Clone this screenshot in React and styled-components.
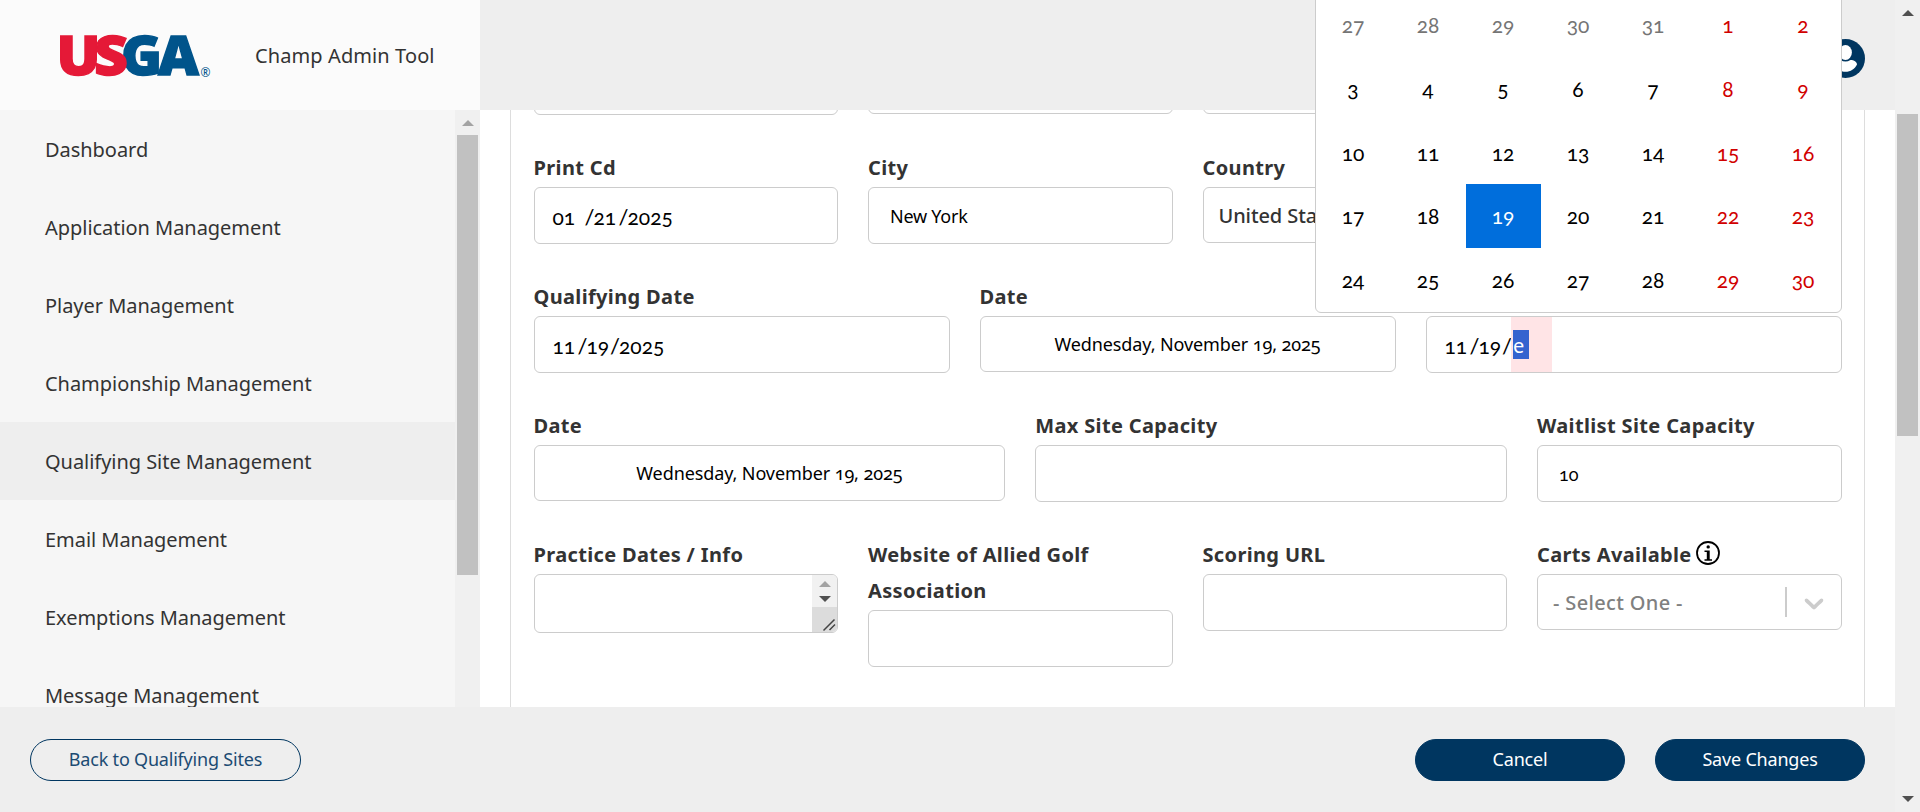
import React from 'react';
import styled, { createGlobalStyle } from 'styled-components';

const GlobalStyle = createGlobalStyle`
  *, *::before, *::after { box-sizing: border-box; }
  body {
    margin: 0;
    overflow: hidden;
    font-family: 'Noto Sans', 'Open Sans', sans-serif;
    font-size: 20px;
    font-variant-numeric: oldstyle-nums;
    color: #333;
    background: #fff;
  }
  button { font: inherit; cursor: pointer; }
`;

const Page = styled.div`
  position: relative;
  display: flex;
  width: 1920px;
  height: 812px;
  overflow: hidden;
`;

const Content = styled.div`
  flex: 1;
  min-width: 0;
  display: flex;
  flex-direction: column;
`;

const TopBar = styled.header`
  display: flex;
  justify-content: space-between;
  height: 110px;
  background: #eee;
`;

const Brand = styled.div`
  display: flex;
  align-items: center;
  width: 480px;
  padding-left: 60px;
  background: #fbfbfb;
`;

const Logo = styled.svg`
  width: 152px;
  height: 44px;
  overflow: visible;
`;

const LogoText = styled.text`
  font-family: 'Noto Sans', sans-serif;
  font-weight: 900;
  font-size: 55px;
  fill: ${(p) => (p.$red ? '#e51937' : '#00548b')};
  stroke: ${(p) => (p.$red ? '#e51937' : '#00548b')};
  stroke-width: 1.4px;
`;

const LogoMark = styled.text`
  font-size: 12px;
  fill: #00548b;
`;

const AppTitle = styled.div`
  margin: 0 0 0 43px;
  white-space: nowrap;
  letter-spacing: 0.1px;
`;

const UserIcon = styled.svg`
  width: 39px;
  height: 39px;
  margin: 39px 30px 0 0;
`;

const Middle = styled.div`
  display: flex;
  height: 597px;
`;

const Sidebar = styled.nav`
  display: flex;
  width: 480px;
  background: #f6f6f6;
  overflow: hidden;
`;

const NavList = styled.ul`
  flex: 1;
  margin: 0;
  padding: 0;
  list-style: none;
`;

const NavItem = styled.li`
  display: flex;
  align-items: center;
  height: 78px;
  padding-left: 45px;
  letter-spacing: -0.04px;
  background: ${(p) => (p.$active ? '#eee' : 'transparent')};
`;

const ScrollTrack = styled.div`
  display: flex;
  flex-direction: column;
  align-items: center;
  width: 25px;
  height: 100%;
  padding-top: 10px;
  background: #f0f0f0;
`;

const ScrollThumb = styled.div`
  width: 21px;
  height: ${(p) => p.$height}px;
  margin-top: ${(p) => p.$gap}px;
  background: #c1c1c1;
`;

const Arrow = styled.span`
  width: 0;
  height: 0;
  border: solid transparent;
  border-width: ${(p) => (p.$down ? '6px 6px 0' : '0 6px 6px')};
  border-${(p) => (p.$down ? 'top' : 'bottom')}-color: ${(p) => (p.$muted ? '#a3a3a3' : '#505050')};
  margin-top: ${(p) => (p.$push ? p.$push : 0)};
`;

const Main = styled.main`
  flex: 1;
  padding: 0 30px;
  overflow: hidden;
  background: #fff;
`;

const Card = styled.section`
  display: flex;
  flex-direction: column;
  gap: 36px;
  height: 800px;
  margin-top: -88px;
  padding: 0 22.5px;
  border: solid #ddd;
  border-width: 0 1px;
`;

const Row = styled.div`
  display: grid;
  grid-template-columns: ${(p) => p.$columns};
  column-gap: 30px;
  height: 93px;
`;

const Field = styled.div`
  display: flex;
  flex-direction: column;
  min-width: 0;
`;

const Label = styled.label`
  display: flex;
  align-items: flex-start;
  margin-top: -1px;
  padding-bottom: 1px;
  font-weight: 700;
  line-height: 36px;
  letter-spacing: 0.35px;
`;

const Control = styled.div`
  flex: none;
  display: flex;
  align-items: center;
  height: ${(p) => p.$height || 57}px;
  border: 1px solid #ccc;
  border-radius: 6px;
  background: #fff;
  overflow: hidden;
  white-space: nowrap;
`;

const TextInput = styled(Control)`
  padding-left: 21px;
  font-size: 18px;
  letter-spacing: -0.25px;
  color: #000;
`;

const NumberInput = styled(TextInput)`
  padding-top: 1px;
  font-family: Lato, 'Noto Sans', sans-serif;
  letter-spacing: 0;
`;

const Readout = styled(Control)`
  justify-content: center;
  font-size: 18px;
  letter-spacing: -0.1px;
  color: #000;
`;

const SelectBox = styled(Control)`
  padding-left: 15px;
  font-weight: 500;
  letter-spacing: ${(p) => (p.$placeholder ? 0.35 : -0.1)}px;
  color: ${(p) => (p.$placeholder ? '#808080' : '#333')};
`;

const Separator = styled.span`
  width: 2px;
  height: 30px;
  margin-left: auto;
  background: #ccc;
`;

const Chevron = styled.svg`
  width: 32px;
  height: 32px;
  margin: 1px 11px 0 11px;
  fill: #ccc;
`;

const DateBox = styled(Control)`
  padding-left: 18px;
  font-family: Lato, 'Noto Sans', sans-serif;
  font-size: 21px;
  color: #000;
`;

const Segment = styled.span`
  width: ${(p) => p.$width}px;
  padding-top: 2px;
`;

const Slash = styled(Segment)`
  padding-left: 1px;
  font-size: 22px;
`;

const InvalidSegment = styled.span`
  display: flex;
  align-items: center;
  width: 41px;
  height: 100%;
  padding-left: 2px;
  background: #ffe4e6;
`;

const Selection = styled.span`
  width: 16px;
  height: 29px;
  font-family: 'Noto Sans', sans-serif;
  font-size: 20px;
  line-height: 31px;
  color: #fff;
  background: #3563cf;
`;

const TextArea = styled(Control)`
  justify-content: flex-end;
`;

const MiniTrack = styled.div`
  display: flex;
  flex-direction: column;
  align-items: center;
  width: 25px;
  height: 57px;
  padding-top: 6px;
  background: #f1f1f1;
`;

const Grip = styled.svg`
  width: 25px;
  height: 25px;
  margin-top: 5px;
  background: #dcdcdc;
`;

const InfoIcon = styled.svg`
  width: 24px;
  height: 24px;
  margin: 4px 0 0 4px;
`;

const Footer = styled.footer`
  display: flex;
  align-items: center;
  gap: 30px;
  height: 105px;
  padding: 0 30px;
  background: #eee;
`;

const Button = styled.button`
  width: ${(p) => p.$width}px;
  height: 42px;
  padding: 0 0 2px;
  border: 1px solid #003660;
  border-radius: 21px;
  font-size: 18px;
  letter-spacing: -0.2px;
  color: ${(p) => (p.$outline ? '#1c4b73' : '#fff')};
  background: ${(p) => (p.$outline ? 'transparent' : '#003660')};
  margin-right: ${(p) => (p.$outline ? 'auto' : 0)};
`;

const Calendar = styled.div`
  position: absolute;
  top: -8px;
  left: 1315px;
  width: 527px;
  height: 321px;
  display: grid;
  grid-template-columns: repeat(7, 75px);
  grid-auto-rows: 63.7px;
  border: 1px solid #ccc;
  border-radius: 6px;
  background: #fff;
`;

const Day = styled.span`
  display: flex;
  align-items: center;
  justify-content: center;
  padding: 0 1px 0 0;
  font-family: Lato, 'Noto Sans', sans-serif;
  font-size: 21px;
  color: ${(p) => ({ out: '#757575', weekend: '#d10000', selected: '#fff' }[p.$kind] || '#000')};
  background: ${(p) => (p.$kind === 'selected' ? '#006edc' : 'transparent')};
`;

const NAV = [
  'Dashboard',
  'Application Management',
  'Player Management',
  'Championship Management',
  'Qualifying Site Management',
  'Email Management',
  'Exemptions Management',
  'Message Management',
];

const DAYS = [27, 28, 29, 30, 31, ...Array.from({ length: 30 }, (_, i) => i + 1)];

function dayKind(day, index) {
  if (index < 5) return 'out';
  if (day === 19) return 'selected';
  return index % 7 > 4 ? 'weekend' : 'day';
}

function DateInput({ month, day, year, monthWidth = 24, dayWidth = 22.5 }) {
  return (
    <DateBox>
      <Segment $width={monthWidth}>{month}</Segment>
      <Slash $width={10}>/</Slash>
      <Segment $width={dayWidth}>{day}</Segment>
      <Slash $width={10}>/</Slash>
      {year ? (
        <Segment $width={50}>{year}</Segment>
      ) : (
        <InvalidSegment>
          <Selection>e</Selection>
        </InvalidSegment>
      )}
    </DateBox>
  );
}

function UsgaLogo() {
  return (
    <Logo viewBox="0 0 152 44" role="img" aria-label="USGA">
      <LogoText x="61" y="42" textLength="41" lengthAdjust="spacingAndGlyphs">G</LogoText>
      <LogoText x="98" y="42" textLength="41" lengthAdjust="spacingAndGlyphs">A</LogoText>
      <LogoText $red x="-3.500" y="42" textLength="44" lengthAdjust="spacingAndGlyphs">U</LogoText>
      <LogoText $red x="34" y="42" textLength="34" lengthAdjust="spacingAndGlyphs">S</LogoText>
      <LogoMark x="140.500" y="43.500">®</LogoMark>
    </Logo>
  );
}

export default function App() {
  const four = 'repeat(4, 1fr)';
  return (
    <Page>
      <GlobalStyle />
      <Content>
        <TopBar>
          <Brand>
            <UsgaLogo />
            <AppTitle>Champ Admin Tool</AppTitle>
          </Brand>
          <UserIcon viewBox="0 0 39 39">
            <circle cx="19.5" cy="19.5" r="19.5" fill="#003660" />
            <ellipse cx="19.5" cy="13.5" rx="6.4" ry="7.5" fill="#fff" />
            <path d="M8 25.500c0-2.400 3-4.500 6.500-4.500 1.700 1 3.300 1.500 5 1.500s3.300-.5 5-1.500c3.500 0 6.500 2.100 6.500 4.500-2 4.500-6.500 7.300-11.500 7.300S10 30 8 25.500z" fill="#fff" />
          </UserIcon>
        </TopBar>
        <Middle>
          <Sidebar>
            <NavList>
              {NAV.map((name) => (
                <NavItem key={name} $active={name === 'Qualifying Site Management'}>{name}</NavItem>
              ))}
            </NavList>
            <ScrollTrack>
              <Arrow $muted />
              <ScrollThumb $height={440} $gap={9} />
            </ScrollTrack>
          </Sidebar>
          <Main>
            <Card>
              <Row $columns={four}>
                <Field><Label>&nbsp;</Label><TextInput /></Field>
                <Field><Label>&nbsp;</Label><SelectBox $height={56} /></Field>
                <Field><Label>&nbsp;</Label><SelectBox $height={56} /></Field>
              </Row>
              <Row $columns={four}>
                <Field>
                  <Label>Print Cd</Label>
                  <DateInput month="01" day="21" year="2025" monthWidth={31} dayWidth={24} />
                </Field>
                <Field><Label>City</Label><TextInput>New York</TextInput></Field>
                <Field><Label>Country</Label><SelectBox $height={56}>United States</SelectBox></Field>
              </Row>
              <Row $columns="repeat(3, 1fr)">
                <Field>
                  <Label>Qualifying Date</Label>
                  <DateInput month="11" day="19" year="2025" />
                </Field>
                <Field><Label>Date</Label><Readout $height={56}>Wednesday, November 19, 2025</Readout></Field>
                <Field>
                  <Label>&nbsp;</Label>
                  <DateInput month="11" day="19" />
                </Field>
              </Row>
              <Row $columns="1fr 1fr 304.5px">
                <Field><Label>Date</Label><Readout $height={56}>Wednesday, November 19, 2025</Readout></Field>
                <Field><Label>Max Site Capacity</Label><TextInput /></Field>
                <Field><Label>Waitlist Site Capacity</Label><NumberInput>10</NumberInput></Field>
              </Row>
              <Row $columns={four}>
                <Field>
                  <Label>Practice Dates / Info</Label>
                  <TextArea $height={59}>
                    <MiniTrack>
                      <Arrow $muted />
                      <Arrow $down $push="9px" />
                      <Grip viewBox="0 0 25 25">
                        <path d="M11.500 23.500L22.500 12.500M17.500 23L23 17.500" stroke="#444" strokeWidth="1.500" />
                      </Grip>
                    </MiniTrack>
                  </TextArea>
                </Field>
                <Field><Label>Website of Allied Golf Association</Label><TextInput /></Field>
                <Field><Label>Scoring URL</Label><TextInput /></Field>
                <Field>
                  <Label>
                    Carts Available
                    <InfoIcon viewBox="0 0 24 24">
                      <circle cx="12" cy="12" r="11" fill="none" stroke="#000" strokeWidth="1.800" />
                      <circle cx="12.200" cy="5.900" r="1.700" />
                      <path d="M8.500 9.500h5.200v8.800h2.300v1.500h-7.500v-1.500h2.300v-7.300h-2.300z" />
                    </InfoIcon>
                  </Label>
                  <SelectBox $height={56} $placeholder>
                    - Select One -
                    <Separator />
                    <Chevron viewBox="0 0 20 20">
                      <path d="M4.516 7.548c0.436-0.446 1.043-0.481 1.576 0l3.908 3.747 3.908-3.747c0.533-0.481 1.141-0.446 1.574 0 0.436 0.445 0.408 1.197 0 1.615-0.406 0.418-4.695 4.502-4.695 4.502-0.217 0.223-0.502 0.335-0.787 0.335s-0.570-0.112-0.789-0.335c0 0-4.287-4.084-4.695-4.502s-0.436-1.170 0-1.615z" />
                    </Chevron>
                  </SelectBox>
                </Field>
              </Row>
            </Card>
          </Main>
        </Middle>
        <Footer>
          <Button $outline $width={271}>Back to Qualifying Sites</Button>
          <Button $width={210}>Cancel</Button>
          <Button $width={210}>Save Changes</Button>
        </Footer>
      </Content>
      <ScrollTrack>
        <Arrow />
        <ScrollThumb $height={322} $gap={98} />
        <Arrow $down $push="360px" />
      </ScrollTrack>
      <Calendar>
        {DAYS.map((day, i) => (
          <Day key={i} $kind={dayKind(day, i)}>{day}</Day>
        ))}
      </Calendar>
    </Page>
  );
}
